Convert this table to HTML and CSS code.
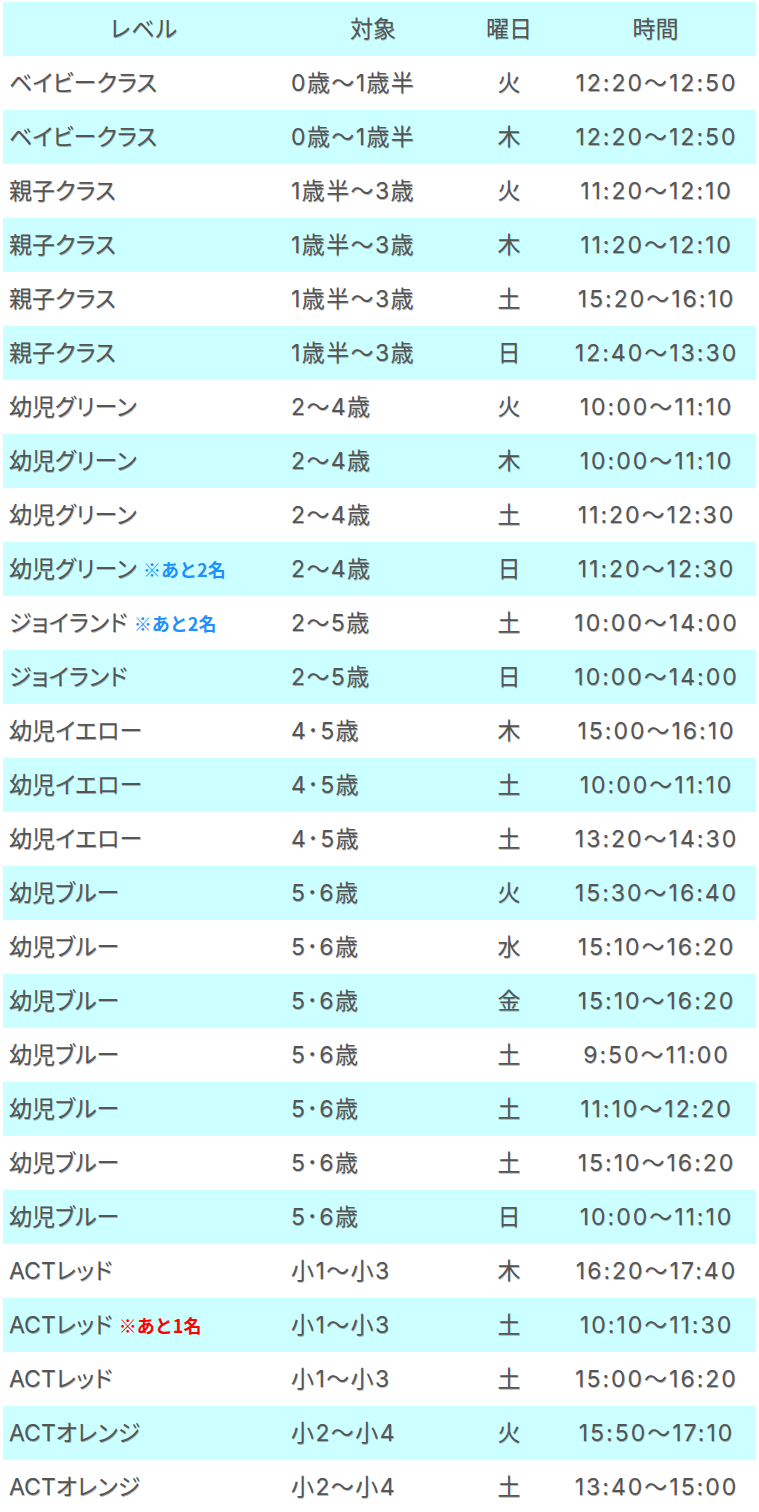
FILE: index.html
```html
<!DOCTYPE html>
<html lang="ja">
<head>
<meta charset="utf-8">
<link rel="stylesheet" href="styles.css">
</head>
<body>
<table class="schedule">
<colgroup><col class="c-level"><col class="c-target"><col class="c-day"><col class="c-time"></colgroup>
<thead>
<tr><th>レベル</th><th>対象</th><th>曜日</th><th>時間</th></tr>
</thead>
<tbody>
<tr><td>ベイビークラス</td><td>0歳〜1歳半</td><td>火</td><td>12:20〜12:50</td></tr>
<tr><td>ベイビークラス</td><td>0歳〜1歳半</td><td>木</td><td>12:20〜12:50</td></tr>
<tr><td>親子クラス</td><td>1歳半〜3歳</td><td>火</td><td>11:20〜12:10</td></tr>
<tr><td>親子クラス</td><td>1歳半〜3歳</td><td>木</td><td>11:20〜12:10</td></tr>
<tr><td>親子クラス</td><td>1歳半〜3歳</td><td>土</td><td>15:20〜16:10</td></tr>
<tr><td>親子クラス</td><td>1歳半〜3歳</td><td>日</td><td>12:40〜13:30</td></tr>
<tr><td>幼児グリーン</td><td>2〜4歳</td><td>火</td><td>10:00〜11:10</td></tr>
<tr><td>幼児グリーン</td><td>2〜4歳</td><td>木</td><td>10:00〜11:10</td></tr>
<tr><td>幼児グリーン</td><td>2〜4歳</td><td>土</td><td>11:20〜12:30</td></tr>
<tr><td>幼児グリーン <span class="note blue">※あと2名</span></td><td>2〜4歳</td><td>日</td><td>11:20〜12:30</td></tr>
<tr><td>ジョイランド <span class="note blue">※あと2名</span></td><td>2〜5歳</td><td>土</td><td>10:00〜14:00</td></tr>
<tr><td>ジョイランド</td><td>2〜5歳</td><td>日</td><td>10:00〜14:00</td></tr>
<tr><td>幼児イエロー</td><td>4･5歳</td><td>木</td><td>15:00〜16:10</td></tr>
<tr><td>幼児イエロー</td><td>4･5歳</td><td>土</td><td>10:00〜11:10</td></tr>
<tr><td>幼児イエロー</td><td>4･5歳</td><td>土</td><td>13:20〜14:30</td></tr>
<tr><td>幼児ブルー</td><td>5･6歳</td><td>火</td><td>15:30〜16:40</td></tr>
<tr><td>幼児ブルー</td><td>5･6歳</td><td>水</td><td>15:10〜16:20</td></tr>
<tr><td>幼児ブルー</td><td>5･6歳</td><td>金</td><td>15:10〜16:20</td></tr>
<tr><td>幼児ブルー</td><td>5･6歳</td><td>土</td><td>9:50〜11:00</td></tr>
<tr><td>幼児ブルー</td><td>5･6歳</td><td>土</td><td>11:10〜12:20</td></tr>
<tr><td>幼児ブルー</td><td>5･6歳</td><td>土</td><td>15:10〜16:20</td></tr>
<tr><td>幼児ブルー</td><td>5･6歳</td><td>日</td><td>10:00〜11:10</td></tr>
<tr><td>ACTレッド</td><td>小1〜小3</td><td>木</td><td>16:20〜17:40</td></tr>
<tr><td>ACTレッド <span class="note red">※あと1名</span></td><td>小1〜小3</td><td>土</td><td>10:10〜11:30</td></tr>
<tr><td>ACTレッド</td><td>小1〜小3</td><td>土</td><td>15:00〜16:20</td></tr>
<tr><td>ACTオレンジ</td><td>小2〜小4</td><td>火</td><td>15:50〜17:10</td></tr>
<tr><td>ACTオレンジ</td><td>小2〜小4</td><td>土</td><td>13:40〜15:00</td></tr>
</tbody>
</table>
</body>
</html>
```

FILE: styles.css
```css
html, body {
  margin: 0;
  padding: 0;
  background: #ffffff;
}
body {
  padding: 2px 3px 0 3px;
  font-family: "Inter", "Noto Sans CJK JP", sans-serif;
  color: #555555;
}
.schedule {
  width: 753px;
  border-collapse: collapse;
  table-layout: fixed;
  font-size: 23px;
  font-weight: 400;
  text-shadow: 0.6px 0.6px 0 rgba(0, 0, 0, 0.3);
}
.c-level { width: 280px; }
.c-target { width: 180px; }
.c-day { width: 92px; }
.c-time { width: 201px; }
.schedule th,
.schedule td {
  height: 54px;
  padding: 0;
  vertical-align: middle;
  line-height: 1;
  white-space: nowrap;
}
.schedule th {
  text-align: center;
  font-weight: 400;
}
.schedule thead tr { background: #ccffff; }
.schedule tbody tr:nth-child(even) { background: #ccffff; }
.schedule td:nth-child(1) {
  padding-left: 6px;
  text-align: left;
  font-feature-settings: "palt";
}
.schedule td:nth-child(2) { padding-left: 8px; text-align: left; letter-spacing: 1.4px; }
.schedule td:nth-child(3) { text-align: center; }
.schedule td:nth-child(4) { text-align: center; letter-spacing: 2px; padding-left: 2px; }
.note {
  font-family: "Noto Sans CJK JP", sans-serif;
  font-size: 18px;
  font-weight: 700;
  letter-spacing: 0;
  font-feature-settings: normal;
  text-shadow: none;
}
.blue { color: #1e90ff; }
.red { color: #ff0000; }
```
